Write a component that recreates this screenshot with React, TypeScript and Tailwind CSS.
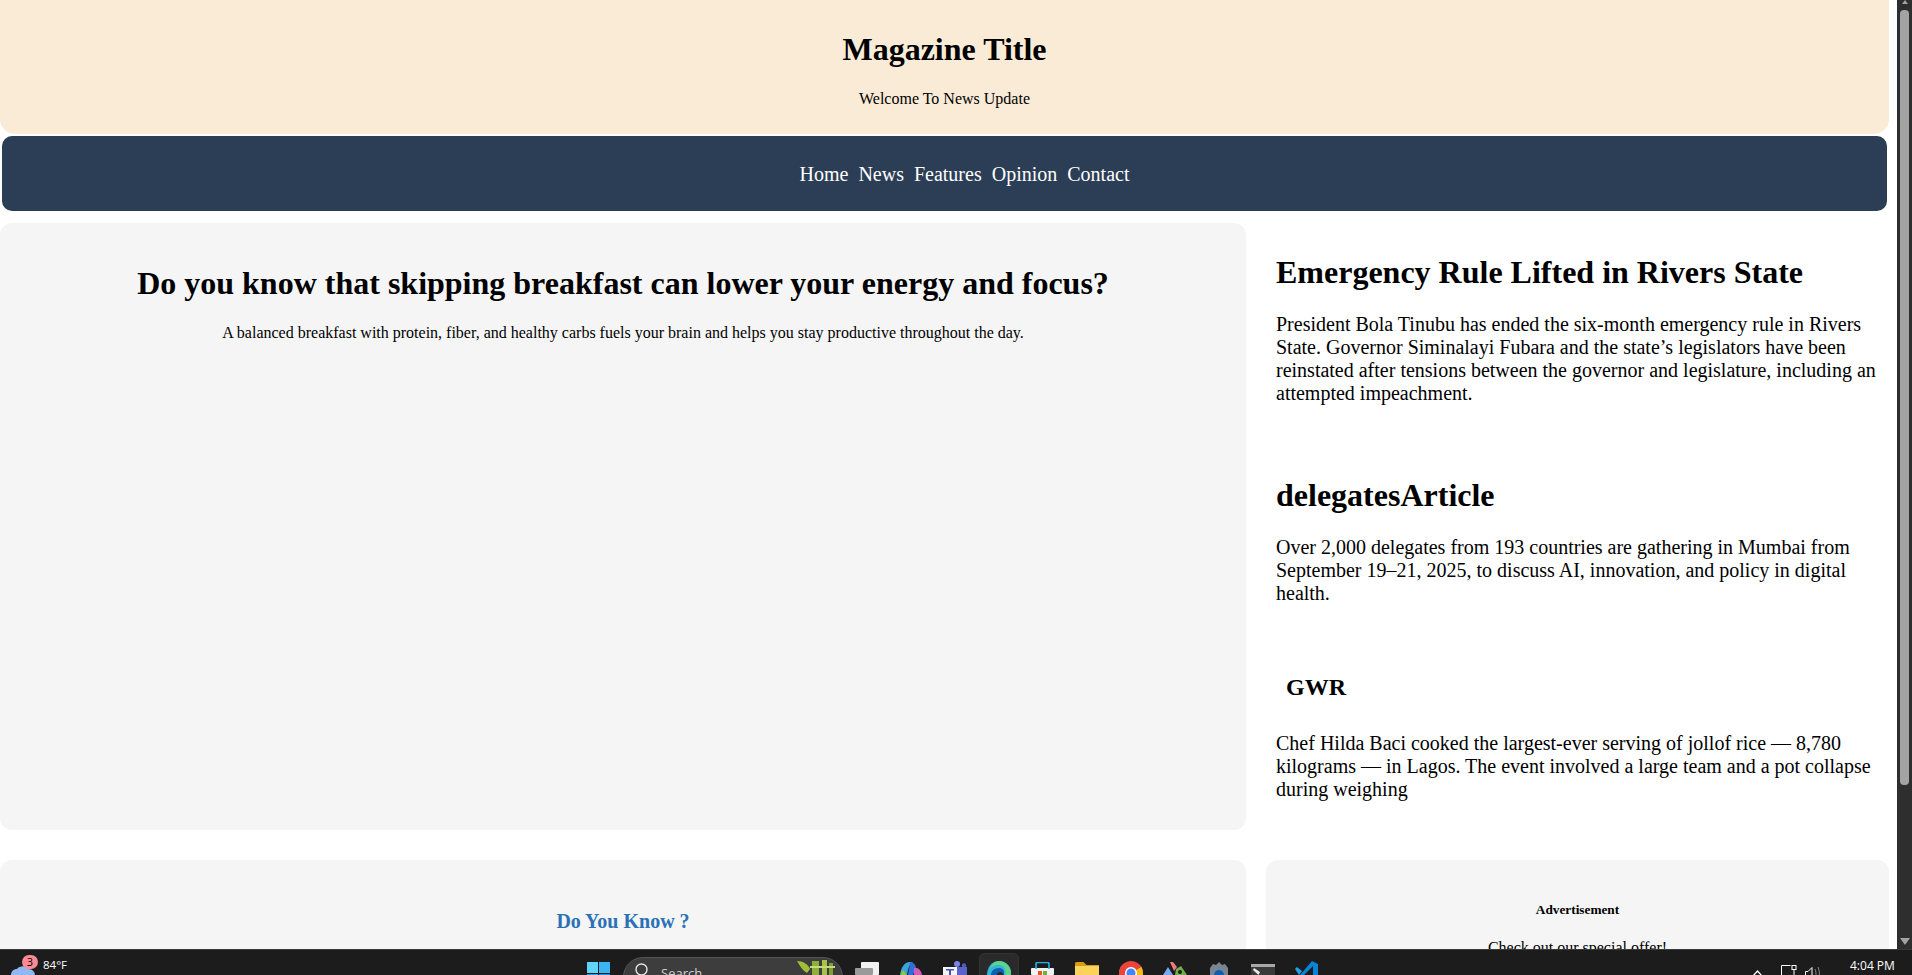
const serif = { fontFamily: '"Liberation Serif", serif' }

function Taskbar() {
  return (
    <div className="h-[26px] shrink-0 bg-[#1c1c1c] border-t border-[#3a3a3a] relative overflow-hidden" style={{ fontFamily: '"Open Sans", "Noto Sans", sans-serif' }}>
      {/* weather */}
      <svg className="absolute left-[11px] top-[15px]" width="24" height="10" viewBox="0 0 24 10">
        <path d="M0 10c0-4 3-6 6-6 2-3 9-4 12 0 3 0 6 3 6 6z" fill="#8fb8f5" />
      </svg>
      <div className="absolute left-[22px] top-[5px] h-[14px] w-[16px] rounded-full bg-[#ff8a94] text-[11px] leading-[14px] text-center text-black">3</div>
      <span className="absolute left-[43px] top-[7px] text-[11.500px] leading-4 text-white">84°F</span>

      {/* start */}
      <svg className="absolute left-[587px] top-[12px]" width="23" height="13" viewBox="0 0 23 13">
        <rect width="11" height="11" fill="#62d4fb" />
        <rect x="12" width="11" height="11" fill="#3ab4f2" />
        <rect y="12" width="11" height="1" fill="#2aa0e8" />
        <rect x="12" y="12" width="11" height="1" fill="#1f8fe0" />
      </svg>

      {/* search */}
      <div className="absolute left-[623px] top-[7px] h-[40px] w-[220px] rounded-[20px] bg-[#3d3d3d] border border-[#555555] flex items-start pl-[37px] pt-[7px] text-[13px] leading-4 text-[#d0d0d0]">
        Search
      </div>
      <svg className="absolute left-[635px] top-[13px]" width="13" height="13" viewBox="0 0 13 13">
        <circle cx="6.5" cy="6.5" r="5.5" fill="none" stroke="#e5e5e5" strokeWidth="1.4" />
      </svg>
      <svg className="absolute left-[797px] top-[10px]" width="40" height="16" viewBox="0 0 40 16">
        <path d="M0 1c6 0 11 3 13 8l-3 4C6 11 3 6 0 1z" fill="#9fbf3b" />
        <rect x="15" y="1" width="7" height="15" fill="#8fae3a" />
        <rect x="25" y="0" width="5" height="15" fill="#a6c24a" />
        <rect x="32" y="3" width="4" height="13" fill="#7f9e35" />
        <rect x="13" y="6" width="25" height="2" fill="#c7d97a" />
      </svg>

      {/* task view */}
      <svg className="absolute left-[855px] top-[12px]" width="24" height="13" viewBox="0 0 24 13">
        <rect x="6" width="18" height="13" rx="1" fill="#f2f2f2" />
        <rect y="6" width="18" height="7" rx="1" fill="#9a9a9a" />
      </svg>

      {/* copilot */}
      <svg className="absolute left-[900px] top-[12px]" width="22" height="13" viewBox="0 0 22 13">
        <path d="M0 13C1 6 4 0 10 0h3c-3 1-5 6-6 13z" fill="#38a7d8" />
        <path d="M1 13c0-2 1-4 2-5l4 5z" fill="#8dc63f" />
        <path d="M10 0c3 0 5 2 6 5l-3 8H8c1-6 2-11 2-13z" fill="#2f6fdc" />
        <path d="M14 6c4-1 7 2 8 7h-8z" fill="#d45ab8" />
      </svg>

      {/* teams */}
      <svg className="absolute left-[943px] top-[11px]" width="24" height="14" viewBox="0 0 24 14">
        <circle cx="14" cy="3" r="3" fill="#7b83eb" />
        <circle cx="21" cy="4.5" r="2.2" fill="#5059c9" />
        <rect x="10" y="6" width="14" height="8" fill="#5b62c8" />
        <rect y="6" width="14" height="8" fill="#f4f4fb" />
        <path d="M3 8h8v1.6H8V14H6V9.6H3z" fill="#4b53bc" />
      </svg>

      {/* edge, active */}
      <div className="absolute left-[979px] top-[3px] h-[40px] w-[40px] rounded-[5px] bg-[#2a2a2a] border border-[#333333]" />
      <svg className="absolute left-[987px] top-[11px]" width="24" height="14" viewBox="0 0 24 14">
        <path d="M0 14C0 6 5 0 12 0s12 5 12 12v2z" fill="#2fb6d9" />
        <path d="M12 0c6 0 12 5 12 12v2h-6c2-5-1-10-7-10-4 0-7 2-8 5 1-5 4-9 9-9z" fill="#5fd38a" />
        <path d="M4 14c0-4 3-7 8-7 3 0 5 2 5 4v3z" fill="#0f5fb0" />
        <path d="M10 14c0-2 1-3 3-3s3 1 3 3z" fill="#2a2a2a" />
      </svg>

      {/* store */}
      <svg className="absolute left-[1031px] top-[12px]" width="23" height="13" viewBox="0 0 23 13">
        <rect y="6" width="23" height="7" rx="1" fill="#f2f2f2" />
        <path d="M5 7V2a1.5 1.5 0 0 1 1.5-1.5h10A1.5 1.5 0 0 1 18 2v5" fill="none" stroke="#25b5e8" strokeWidth="1.6" />
        <rect x="7" y="9" width="4" height="4" fill="#e8542a" />
        <rect x="12" y="9" width="4" height="4" fill="#6cb33f" />
      </svg>

      {/* folder */}
      <svg className="absolute left-[1075px] top-[12px]" width="24" height="13" viewBox="0 0 24 13">
        <path d="M0 1.5A1.5 1.5 0 0 1 1.500 0h7l3 3H24v10H0z" fill="#d99b10" />
        <rect y="4" width="24" height="9" fill="#fbd35a" />
      </svg>

      {/* chrome */}
      <svg className="absolute left-[1119px] top-[11px]" width="24" height="14" viewBox="0 0 24 14">
        <circle cx="12" cy="12" r="12" fill="#e8453c" />
        <path d="M12 12 22.400 6A12 12 0 0 1 24 12v2h-9z" fill="#f9bc15" />
        <path d="M12 12 1.600 6A12 12 0 0 0 0 12v2h9z" fill="#e8453c" />
        <circle cx="12" cy="12" r="6" fill="#ffffff" />
        <circle cx="12" cy="12" r="4.500" fill="#4285f4" />
      </svg>

      {/* git tool */}
      <svg className="absolute left-[1163px] top-[12px]" width="24" height="13" viewBox="0 0 24 13">
        <path d="M7 0l3-0 4 5-3 4z" fill="#ef7b7b" />
        <path d="M0 13 5 5l5 8z" fill="#7aa7f0" />
        <path d="M13 7l5-3 6 9H12z" fill="#6fae4b" />
        <circle cx="17" cy="10" r="2" fill="#1c1c1c" />
      </svg>

      {/* settings */}
      <svg className="absolute left-[1207px] top-[12px]" width="24" height="13" viewBox="0 0 24 13">
        <path d="M3 13V6l3-4 3 1 3-3 3 3 3-1 3 4v7z" fill="#7a8594" />
        <path d="M7 13a5 5 0 0 1 10 0z" fill="#0f5fb0" />
      </svg>

      {/* terminal */}
      <svg className="absolute left-[1251px] top-[14px]" width="24" height="11" viewBox="0 0 24 11">
        <rect width="24" height="11" fill="#3a3a3a" />
        <rect width="24" height="3" fill="#a8a8a8" />
        <path d="M3 4l6 4-1.500 3L2 6z" fill="#e8e8e8" />
      </svg>

      {/* vs code */}
      <svg className="absolute left-[1295px] top-[11px]" width="23" height="14" viewBox="0 0 23 14">
        <path d="M17 0 23 3v11h-5V5L9 14H5z" fill="#0a84d6" />
        <path d="M0 8l2-2 5 4-3 4z" fill="#1ea0ea" />
      </svg>

      {/* tray */}
      <svg className="absolute left-[1752px] top-[20px]" width="11" height="6" viewBox="0 0 11 6">
        <path d="M1 6 5.500 1 10 6" fill="none" stroke="#ffffff" strokeWidth="1.300" />
      </svg>
      <svg className="absolute left-[1781px] top-[15px]" width="16" height="11" viewBox="0 0 16 11">
        <path d="M.5 11V.5h9M13 4.500V11" fill="none" stroke="#ffffff" />
        <rect x="11" y=".5" width="4" height="4" fill="none" stroke="#ffffff" />
      </svg>
      <svg className="absolute left-[1805px] top-[17px]" width="17" height="9" viewBox="0 0 17 9">
        <path d="M.5 9V4.500H3L7 .5V9" fill="none" stroke="#ffffff" />
        <path d="M10 2c1 2 1 5 1 7M13 0c1 3 2 6 1 9" fill="none" stroke="#8a8a8a" />
      </svg>
      <span className="absolute left-[1850px] top-[8px] text-[12px] leading-4 text-white">4:04 PM</span>
    </div>
  )
}

export default function App() {
  return (
    <div className="h-[975px] w-full overflow-hidden flex flex-col bg-white text-black" style={serif}>
      <div className="h-[949px] flex overflow-hidden">
        <div className="flex-1 min-w-0 pr-[8px]">
          <header className="h-[134px] bg-[#faebd7] rounded-b-[15px] flex flex-col items-center">
            <h1 className="mt-[31px] text-[32px] leading-[37px] font-bold">Magazine Title</h1>
            <p className="mt-[22px] text-base leading-[18px]">Welcome To News Update</p>
          </header>
          <nav className="h-[75px] mt-[2px] mx-[2px] pl-[40px] bg-[#2b3e56] rounded-[10px] flex items-center justify-center gap-[10px] text-white text-[20px]">
            <span>Home</span><span>News</span><span>Features</span><span>Opinion</span><span>Contact</span>
          </nav>
          <div className="mt-[12px] flex gap-[30px]">
            <section className="w-[1246px] h-[607px] bg-[#f5f5f5] rounded-[12px] text-center">
              <h2 className="mt-[42px] text-[32px] leading-[37px] font-bold">Do you know that skipping breakfast can lower your energy and focus?</h2>
              <p className="mt-[22px] text-base leading-[18px]">A balanced breakfast with protein, fiber, and healthy carbs fuels your brain and helps you stay productive throughout the day.</p>
            </section>
            <aside className="flex-1 min-w-0 pt-[31px] text-[20px] leading-[23px]">
              <h2 className="text-[32px] leading-[37px] font-bold">Emergency Rule Lifted in Rivers State</h2>
              <p className="mt-[22px]">President Bola Tinubu has ended the six-month emergency rule in Rivers State. Governor Siminalayi Fubara and the state’s legislators have been reinstated after tensions between the governor and legislature, including an attempted impeachment.</p>
              <h2 className="mt-[72px] text-[32px] leading-[37px] font-bold">delegatesArticle</h2>
              <p className="mt-[22px]">Over 2,000 delegates from 193 countries are gathering in Mumbai from September 19–21, 2025, to discuss AI, innovation, and policy in digital health.</p>
              <h3 className="mt-[68px] pl-[10px] text-[24px] leading-[28px] font-bold">GWR</h3>
              <p className="mt-[31px]">Chef Hilda Baci cooked the largest-ever serving of jollof rice — 8,780 kilograms — in Lagos. The event involved a large team and a pot collapse during weighing</p>
            </aside>
          </div>
          <div className="mt-[30px] flex gap-[20px]">
            <section className="w-[1246px] h-[300px] bg-[#f5f5f5] rounded-[12px] text-center pt-[50px]">
              <h3 className="text-[20px] leading-[23px] font-bold text-[#2a72b5]">Do You Know ?</h3>
            </section>
            <section className="flex-1 h-[300px] bg-[#f5f5f5] rounded-[12px] text-center pt-[42px]">
              <h4 className="text-[13.280px] leading-[15px] font-bold">Advertisement</h4>
              <p className="mt-[22px] text-base leading-[18px]">Check out our special offer!</p>
            </section>
          </div>
        </div>
        <div className="w-[15px] shrink-0 bg-[#2e2e2e] relative">
          <div className="absolute left-[3px] top-[10px] w-[9px] h-[775px] bg-[#a3a3a3] rounded-[4px]" />
          <svg className="absolute left-[3px] top-[938px]" width="10" height="7" viewBox="0 0 10 7">
            <path d="M0 0h10L5 7z" fill="#a3a3a3" />
          </svg>
          <svg className="absolute left-[3px] top-0" width="10" height="4" viewBox="0 0 10 4">
            <path d="M2 4h6L5 0z" fill="#a3a3a3" />
          </svg>
        </div>
      </div>
      <Taskbar />
    </div>
  )
}
